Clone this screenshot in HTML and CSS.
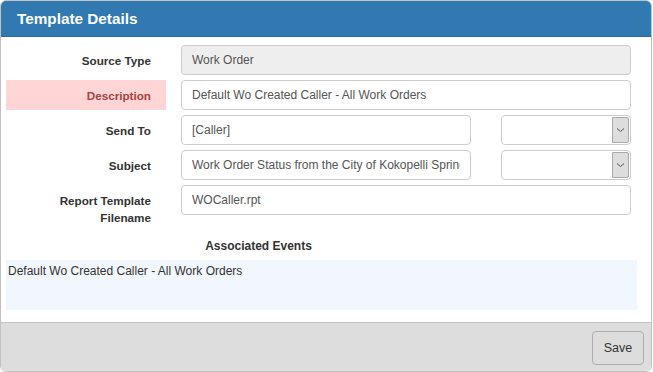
FILE: index.html
```html
<!DOCTYPE html>
<html lang="en">
<head>
    <meta charset="UTF-8">
    <meta name="viewport" content="width=device-width, initial-scale=1.0">
    <title>Template Details</title>
    <link rel="stylesheet" href="styles.css">
</head>
<body>
    <div class="panel">
        <div class="panel-heading">Template Details</div>

        <div class="panel-body">
            <div class="form-row">
                <label class="field-label">Source Type</label>
                <div class="field">
                    <input class="text-input" type="text" value="Work Order" disabled>
                </div>
            </div>

            <div class="form-row">
                <label class="field-label has-error">Description</label>
                <div class="field">
                    <input class="text-input" type="text" value="Default Wo Created Caller - All Work Orders">
                </div>
            </div>

            <div class="form-row">
                <label class="field-label">Send To</label>
                <div class="field split">
                    <input class="text-input" type="text" value="[Caller]">
                    <div class="select-box">
                        <span class="select-arrow">
                            <svg width="9" height="6" viewBox="0 0 9 6"><path d="M1 1.5 L4.5 4.5 L8 1.5" fill="none" stroke="#555" stroke-width="1"/></svg>
                        </span>
                    </div>
                </div>
            </div>

            <div class="form-row">
                <label class="field-label">Subject</label>
                <div class="field split">
                    <input class="text-input" type="text" value="Work Order Status from the City of Kokopelli Springs">
                    <div class="select-box">
                        <span class="select-arrow">
                            <svg width="9" height="6" viewBox="0 0 9 6"><path d="M1 1.5 L4.5 4.5 L8 1.5" fill="none" stroke="#555" stroke-width="1"/></svg>
                        </span>
                    </div>
                </div>
            </div>

            <div class="form-row">
                <label class="field-label">Report Template Filename</label>
                <div class="field">
                    <input class="text-input" type="text" value="WOCaller.rpt">
                </div>
            </div>

            <div class="events-title">Associated Events</div>
            <div class="events-list">Default Wo Created Caller - All Work Orders</div>
        </div>

        <div class="panel-footer">
            <button class="btn-save">Save</button>
        </div>
    </div>
</body>
</html>
```

FILE: styles.css
```css
* {
    box-sizing: border-box;
}

body {
    margin: 0;
    font-family: 'Liberation Sans', Arial, sans-serif;
    color: #333;
    background: #fff;
}

.panel {
    width: 652px;
    height: 372px;
    border: 1px solid #c2c2c2;
    border-radius: 6px;
    overflow: hidden;
    display: flex;
    flex-direction: column;
}

.panel-heading {
    height: 36px;
    flex-shrink: 0;
    padding: 0 16px;
    display: flex;
    align-items: center;
    background-color: #3079b1;
    border-bottom: 1px solid #2c6ea1;
    color: #fff;
    font-size: 15.3px;
    font-weight: bold;
}

.panel-body {
    flex: 1;
    padding: 8px 5px 0 5px;
}

.form-row {
    display: grid;
    grid-template-columns: 160px 480px;
    margin-bottom: 5px;
}

.field-label {
    padding: 7px 15px 6px 15px;
    line-height: 17px;
    text-align: right;
    font-size: 11.7px;
    font-weight: bold;
    color: #333;
}

.field-label.has-error {
    background-color: #ffd5d5;
    color: #a94442;
}

.field {
    padding-left: 15px;
    padding-right: 15px;
}

.field.split {
    display: grid;
    grid-template-columns: 290px 130px;
    column-gap: 30px;
}

.text-input {
    display: block;
    width: 100%;
    height: 30px;
    padding: 0 10px;
    border: 1px solid #ccc;
    border-radius: 4px;
    font-family: inherit;
    font-size: 12px;
    color: #555;
    background: #fff;
    outline: none;
}

.text-input:disabled {
    background-color: #eee;
}

.select-box {
    height: 30px;
    border: 1px solid #ccc;
    border-radius: 4px;
    display: flex;
    justify-content: flex-end;
    padding: 1px;
}

.select-arrow {
    width: 17px;
    background-color: #ddd;
    border: 1px solid #aaa;
    border-radius: 0 2px 2px 0;
    display: flex;
    align-items: center;
    justify-content: center;
}

.events-title {
    width: 505px;
    padding: 1px 0 6px;
    line-height: 16px;
    text-align: center;
    font-size: 12px;
    font-weight: bold;
}

.events-list {
    width: 631px;
    height: 50px;
    padding: 3px 2px;
    line-height: 16px;
    background-color: #f2f7fd;
    font-size: 12px;
    color: #333;
}

.panel-footer {
    height: 49px;
    flex-shrink: 0;
    border-top: 1px solid #c2c2c2;
    background-color: #ddd;
    display: flex;
    justify-content: flex-end;
    align-items: flex-start;
    padding: 8px 7px 0 0;
}

.btn-save {
    width: 52px;
    height: 34px;
    border: 1px solid #adadad;
    border-radius: 4px;
    background: #ddd;
    font-family: inherit;
    font-size: 12.5px;
    color: #333;
}
```
